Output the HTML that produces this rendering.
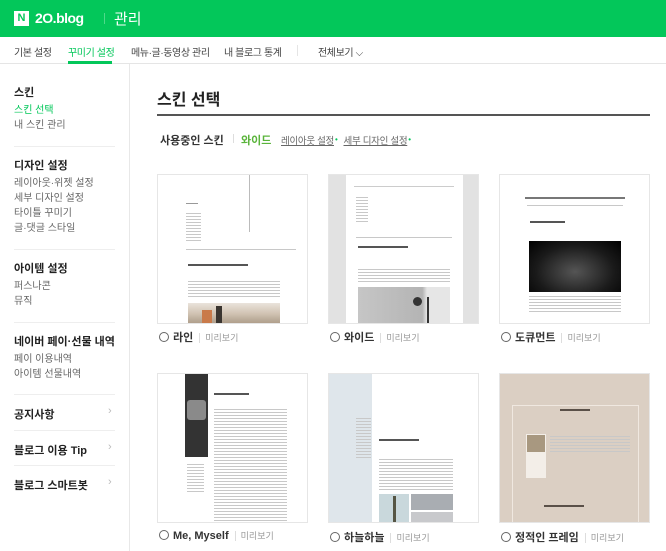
<!DOCTYPE html>
<html><head><meta charset="utf-8">
<style>
*{margin:0;padding:0;box-sizing:border-box}
body{width:666px;height:551px;overflow:hidden;background:#fff;font-family:"Liberation Sans","Noto Sans CJK KR",sans-serif;position:relative;color:#333}
.a{position:absolute;white-space:nowrap}
.hdr{left:0;top:0;width:666px;height:37px;background:#03c75a}
.nav{left:0;top:37px;width:666px;height:27px;border-bottom:1px solid #e5e5e5;background:#fff}
.nv{font-size:10px;color:#444;top:44px;letter-spacing:-0.4px}
.sb{left:129px;top:64px;width:1px;height:487px;background:#e8e8e8}
.sh{font-size:11px;font-weight:bold;color:#222;left:14px}
.si{font-size:10px;color:#666;left:14px}
.dv{left:14px;width:101px;height:1px;background:#eee}
.chev{left:108px;font-size:11px;color:#bbb}
.card{position:absolute;width:151px;height:150px;border:1px solid #e6e6e6;overflow:hidden;background:#fff}
.l{position:absolute;height:1px;background:#ccc}
.t{position:absolute;height:2px;background:#555}
.lab{position:absolute;font-size:11px;white-space:nowrap}
.lab .r{display:inline-block;width:10px;height:10px;border:1px solid #666;border-radius:50%;vertical-align:-1px;margin-right:4px}
.lab b{color:#333}
.lab span.p{color:#999;font-size:9px;margin-left:6px;border-left:1px solid #ddd;padding-left:5px}
.txt{position:absolute;background:repeating-linear-gradient(#c8c8c8 0 1px,transparent 1px 3px)}
.lk{text-decoration:underline}
.dot{color:#03c75a;font-size:8px;margin:0 6px 0 1px;vertical-align:2px}
</style></head><body>
<div class="a hdr"></div>
<div class="a" style="left:14px;top:11px;width:15px;height:15px;background:#fff;color:#03c75a;font-size:11px;font-weight:bold;text-align:center;line-height:15px">N</div>
<div class="a" style="left:35px;top:10px;color:#fff;font-size:14px;font-weight:bold;letter-spacing:-0.5px">2O.blog</div>
<div class="a" style="left:104px;top:13px;width:1px;height:11px;background:#4fd98a"></div>
<div class="a" style="left:114px;top:8px;color:#fff;font-size:15px">관리</div>
<div class="a nav"></div>
<div class="a nv" style="left:14px">기본 설정</div>
<div class="a nv" style="left:68px;color:#03c75a">꾸미기 설정</div>
<div class="a" style="left:68px;top:61px;width:44px;height:3px;background:#03c75a"></div>
<div class="a nv" style="left:131px">메뉴·글·동영상 관리</div>
<div class="a nv" style="left:224px">내 블로그 통계</div>
<div class="a" style="left:297px;top:45px;width:1px;height:11px;background:#e5e5e5"></div>
<div class="a nv" style="left:318px">전체보기 ⌵</div>
<div class="a sb"></div>

<div class="a sh" style="top:84px">스킨</div>
<div class="a si" style="top:101px;color:#03c75a">스킨 선택</div>
<div class="a si" style="top:116px">내 스킨 관리</div>
<div class="a dv" style="top:146px"></div>
<div class="a sh" style="top:157px">디자인 설정</div>
<div class="a si" style="top:174px">레이아웃·위젯 설정</div>
<div class="a si" style="top:189px">세부 디자인 설정</div>
<div class="a si" style="top:204px">타이틀 꾸미기</div>
<div class="a si" style="top:219px">글·댓글 스타일</div>
<div class="a dv" style="top:249px"></div>
<div class="a sh" style="top:260px">아이템 설정</div>
<div class="a si" style="top:277px">퍼스나콘</div>
<div class="a si" style="top:292px">뮤직</div>
<div class="a dv" style="top:322px"></div>
<div class="a sh" style="top:333px">네이버 페이·선물 내역</div>
<div class="a si" style="top:350px">페이 이용내역</div>
<div class="a si" style="top:365px">아이템 선물내역</div>
<div class="a dv" style="top:394px"></div>
<div class="a sh" style="top:406px">공지사항</div><div class="a chev" style="top:405px">›</div>
<div class="a dv" style="top:430px"></div>
<div class="a sh" style="top:442px">블로그 이용 Tip</div><div class="a chev" style="top:441px">›</div>
<div class="a dv" style="top:465px"></div>
<div class="a sh" style="top:477px">블로그 스마트봇</div><div class="a chev" style="top:476px">›</div>

<div class="a" style="left:157px;top:86px;font-size:16px;font-weight:bold;color:#222">스킨 선택</div>
<div class="a" style="left:157px;top:114px;width:493px;height:2px;background:#555"></div>
<div class="a" style="left:160px;top:132px;font-size:11px;font-weight:bold;color:#333">사용중인 스킨</div>
<div class="a" style="left:233px;top:134px;width:1px;height:9px;background:#ddd"></div>
<div class="a" style="left:241px;top:132px;font-size:11px;font-weight:bold;color:#5ab43b">와이드</div>
<div class="a" style="left:281px;top:133px;font-size:9.5px;color:#666;letter-spacing:-0.3px"><span class="lk">레이아웃 설정</span><span class="dot">•</span><span class="lk">세부 디자인 설정</span><span class="dot">•</span></div>

<!-- card 1 -->
<div class="card" style="left:157px;top:174px">
 <div class="l" style="left:91px;top:0;width:1px;height:57px;background:#bbb"></div>
 <div class="l" style="left:28px;top:28px;width:12px;background:#999"></div>
 <div class="txt" style="left:28px;top:38px;width:15px;height:30px"></div>
 <div class="txt" style="left:28px;top:74px;width:110px;height:2px"></div>
 <div class="t" style="left:30px;top:89px;width:60px"></div>
 <div class="txt" style="left:30px;top:106px;width:92px;height:18px"></div>
 <div class="a" style="left:30px;top:128px;width:92px;height:25px;background:linear-gradient(#eae3dc,#cfc1b0 45%,#b7a896 70%,#a58e78)"></div>
 <div class="a" style="left:44px;top:135px;width:10px;height:15px;background:#c97a4a"></div>
 <div class="a" style="left:58px;top:131px;width:6px;height:20px;background:#3a3530"></div>
</div>
<!-- card 2 -->
<div class="card" style="left:328px;top:174px;background:#e2e2e2">
 <div class="a" style="left:17px;top:0;width:117px;height:150px;background:#fff"></div>
 <div class="l" style="left:25px;top:11px;width:100px"></div>
 <div class="txt" style="left:27px;top:22px;width:12px;height:27px"></div>
 <div class="txt" style="left:27px;top:62px;width:96px;height:2px"></div>
 <div class="t" style="left:29px;top:71px;width:50px"></div>
 <div class="txt" style="left:29px;top:94px;width:92px;height:15px"></div>
 <div class="a" style="left:29px;top:112px;width:92px;height:38px;background:linear-gradient(90deg,#c6c6c6,#b4b4b4 70%,#e6e6e6 75%)"></div>
 <div class="a" style="left:84px;top:122px;width:9px;height:9px;background:#333;border-radius:50%"></div>
 <div class="a" style="left:98px;top:122px;width:2px;height:28px;background:#333"></div>
</div>
<!-- card 3 -->
<div class="card" style="left:499px;top:174px">
 <div class="a" style="left:25px;top:22px;width:100px;height:2px;background:#777"></div>
 <div class="txt" style="left:27px;top:30px;width:96px;height:2px"></div>
 <div class="t" style="left:30px;top:46px;width:35px"></div>
 <div class="a" style="left:29px;top:66px;width:92px;height:51px;background:radial-gradient(ellipse at 50% 60%,#555,#1a1a1a 60%,#000)"></div>
 <div class="txt" style="left:29px;top:121px;width:92px;height:16px"></div>
</div>
<!-- card 4 -->
<div class="card" style="left:157px;top:373px">
 <div class="a" style="left:27px;top:0;width:23px;height:83px;background:#333"></div>
 <div class="a" style="left:29px;top:26px;width:19px;height:20px;background:#8a8a8a;border-radius:3px"></div>
 <div class="txt" style="left:29px;top:90px;width:17px;height:30px"></div>
 <div class="t" style="left:56px;top:19px;width:35px"></div>
 <div class="txt" style="left:56px;top:35px;width:73px;height:115px"></div>
</div>
<!-- card 5 -->
<div class="card" style="left:328px;top:373px">
 <div class="a" style="left:0;top:0;width:43px;height:150px;background:#dfe6eb"></div>
 <div class="txt" style="left:27px;top:44px;width:15px;height:40px"></div>
 <div class="t" style="left:50px;top:65px;width:40px"></div>
 <div class="txt" style="left:50px;top:85px;width:74px;height:32px"></div>
 <div class="a" style="left:50px;top:120px;width:30px;height:30px;background:#c9d8dc"></div>
 <div class="a" style="left:64px;top:122px;width:3px;height:28px;background:#554"></div>
 <div class="a" style="left:82px;top:120px;width:42px;height:16px;background:#a9adb2"></div>
 <div class="a" style="left:82px;top:138px;width:42px;height:12px;background:#c8c9cc"></div>
</div>
<!-- card 6 -->
<div class="card" style="left:499px;top:373px;background:#dbcfc3">
 <div class="a" style="left:12px;top:31px;width:127px;height:119px;border:1px solid #f0e8e0;border-bottom:none"></div>
 <div class="t" style="left:60px;top:35px;width:30px;background:#5a5048"></div>
 <div class="a" style="left:26px;top:60px;width:20px;height:44px;background:#f3eee8"></div>
 <div class="a" style="left:27px;top:61px;width:18px;height:17px;background:#a89880"></div>
 <div class="txt" style="left:50px;top:62px;width:80px;height:18px"></div>
 <div class="t" style="left:44px;top:131px;width:40px;background:#5a5048"></div>
</div>

<div class="lab" style="left:159px;top:329px"><i class="r"></i><b>라인</b><span class="p">미리보기</span></div>
<div class="lab" style="left:330px;top:329px"><i class="r"></i><b>와이드</b><span class="p">미리보기</span></div>
<div class="lab" style="left:501px;top:329px"><i class="r"></i><b>도큐먼트</b><span class="p">미리보기</span></div>
<div class="lab" style="left:159px;top:529px"><i class="r"></i><b>Me, Myself</b><span class="p">미리보기</span></div>
<div class="lab" style="left:330px;top:529px"><i class="r"></i><b>하늘하늘</b><span class="p">미리보기</span></div>
<div class="lab" style="left:501px;top:529px"><i class="r"></i><b>정적인 프레임</b><span class="p">미리보기</span></div>
</body></html>
